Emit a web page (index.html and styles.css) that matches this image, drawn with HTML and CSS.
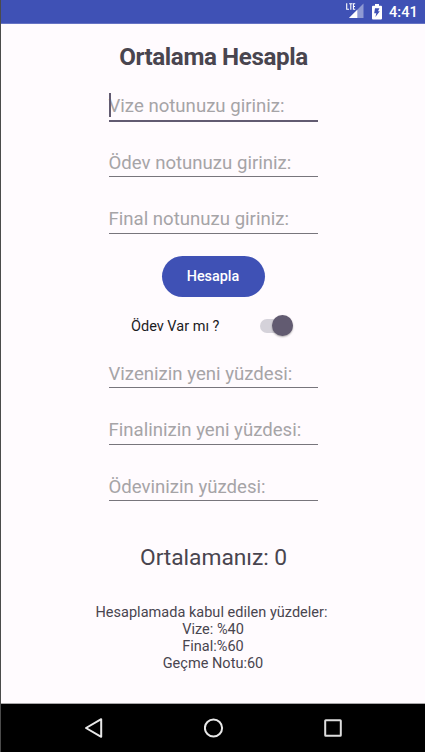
FILE: index.html
```html
<!DOCTYPE html>
<html lang="tr">
<head>
<meta charset="utf-8">
<title>Ortalama Hesapla</title>
<link rel="stylesheet" href="styles.css">
</head>
<body>
<div class="screen">
  <header class="status">
    <svg class="signal" width="20" height="18" viewBox="0 0 20 18">
      <path d="M18.5 3.5V18H4z" fill="#8f9ad3"/>
      <path d="M0 0H11V10H0z" fill="#3f51b5"/>
      <path d="M12.3 9.7V18H4z" fill="#fff"/>
      <path d="M1.7 3.2V9.3H4M4.2 3.8H7.4M5.8 3.8V9.8M10.2 3.8H8.4V9.3H10.2M8.4 6.5H10" fill="none" stroke="#fff" stroke-width="1.1"/>
    </svg>
    <svg class="battery" width="10" height="16" viewBox="0 0 10 16">
      <path d="M3 0H7V1.7H9Q10 1.7 10 2.7V14.5Q10 15.5 9 15.5H1Q0 15.5 0 14.5V2.7Q0 1.7 1 1.7H3z" fill="#fff"/>
      <path d="M3 4.2H7.4L6 7.3H7.8L3.4 13L4.3 9.2H2.2z" fill="#3f51b5"/>
    </svg>
    <span class="clock">4:41</span>
  </header>
  <main class="content">
    <h1 class="title">Ortalama Hesapla</h1>
    <div class="fields scores">
      <div class="field active"><span>Vize notunuzu giriniz:</span></div>
      <div class="field"><span>Ödev notunuzu giriniz:</span></div>
      <div class="field"><span>Final notunuzu giriniz:</span></div>
    </div>
    <button class="button">Hesapla</button>
    <div class="toggle">
      <span class="toggle-label">Ödev Var mı ?</span>
      <span class="switch"><i class="thumb"></i></span>
    </div>
    <div class="fields weights">
      <div class="field"><span>Vizenizin yeni yüzdesi:</span></div>
      <div class="field"><span>Finalinizin yeni yüzdesi:</span></div>
      <div class="field"><span>Ödevinizin yüzdesi:</span></div>
    </div>
    <p class="result">Ortalamanız: 0</p>
    <div class="notes">
      <p class="notes-head">Hesaplamada kabul edilen yüzdeler:</p>
      <p>Vize: %40</p>
      <p>Final:%60</p>
      <p>Geçme Notu:60</p>
    </div>
  </main>
  <nav class="nav">
    <svg width="20" height="22" viewBox="0 0 20 22"><path d="M17.2 2.2V19.8L2 11z" fill="none" stroke="#e8e8e8" stroke-width="2" stroke-linejoin="round"/></svg>
    <svg width="20" height="22" viewBox="0 0 20 22"><circle cx="9.5" cy="11" r="8.6" fill="none" stroke="#e8e8e8" stroke-width="2"/></svg>
    <svg width="20" height="22" viewBox="0 0 20 22"><rect x="2.2" y="3.2" width="15.6" height="15.6" rx=".6" fill="none" stroke="#dedede" stroke-width="2"/></svg>
  </nav>
</div>
</body>
</html>
```
FILE: styles.css
```css
* { box-sizing: border-box; }
body { margin: 0; background: #fffbfe; font-family: Roboto, "Liberation Sans", sans-serif; color: #49454f; }
p { margin: 0; }
.screen { width: 425px; height: 752px; border-left: 1px solid #4b4b4b; display: flex; flex-direction: column; overflow: hidden; }
.status { height: 24px; flex: none; background: #3f51b5; border-bottom: 1px solid #6673c4; display: flex; align-items: flex-start; color: #fff; }
.signal { margin-left: 344px; }
.battery { margin: 4px 0 0 7px; }
.clock { margin: 3px 0 0 7px; font-size: 14.6px; line-height: 18px; font-weight: 500; }
.content { flex: 1; display: flex; flex-direction: column; align-items: center; }
.title { margin: 17px 0 0 1px; height: 32px; line-height: 32px; font-size: 24.2px; letter-spacing: -.4px; font-weight: 700; white-space: nowrap; }
.fields { width: 209px; display: flex; flex-direction: column; gap: 26.5px; }
.scores { margin-top: 19px; }
.weights { margin-top: 22px; }
.field { height: 30px; padding-bottom: 2.5px; border-bottom: 1px solid #78757c; display: flex; align-items: flex-end; font-size: 18.6px; line-height: 22px; color: #a6a4a7; white-space: nowrap; }
.field.active { position: relative; padding-bottom: 3px; border-bottom: 2px solid #625b71; }
.field.active::before { content: ""; position: absolute; left: 0; top: 1px; width: 2px; height: 24px; background: #625b71; }
.active + .field { margin-top: -1.5px; padding-bottom: 2px; }
.button { margin: 22.5px 0 0 1px; width: 103px; height: 41px; border: 0; border-radius: 21px; background: #3f51b5; color: #fff; font: 500 14.4px/40px Roboto, "Liberation Sans", sans-serif; padding: 1px 1px 0 0; }
.toggle { width: 163px; height: 21px; margin: 18px 3px 0 0; display: flex; justify-content: space-between; align-items: center; color: #1c1b1f; font-size: 14.5px; }
.toggle-label { padding: 2px 0 0 1px; }
.switch { width: 33px; height: 14px; border-radius: 7px; background: #d5d2da; display: flex; justify-content: flex-end; align-items: center; }
.thumb { width: 21px; height: 21px; flex: none; border-radius: 50%; background: #625b71; box-shadow: 0 1px 2px #0005; }
.result { margin: 43px 0 0 1px; font-size: 22.8px; letter-spacing: -.05px; line-height: 28px; }
.notes { margin-top: 32px; font-size: 14.5px; letter-spacing: .02px; line-height: 17px; text-align: center; }
.notes-head { margin-right: 3px; }
.nav { height: 49px; flex: none; background: #000; border-top: 1px solid #a9a7a8; display: flex; justify-content: center; align-items: center; gap: 99.5px; padding-left: 1px; }
```
